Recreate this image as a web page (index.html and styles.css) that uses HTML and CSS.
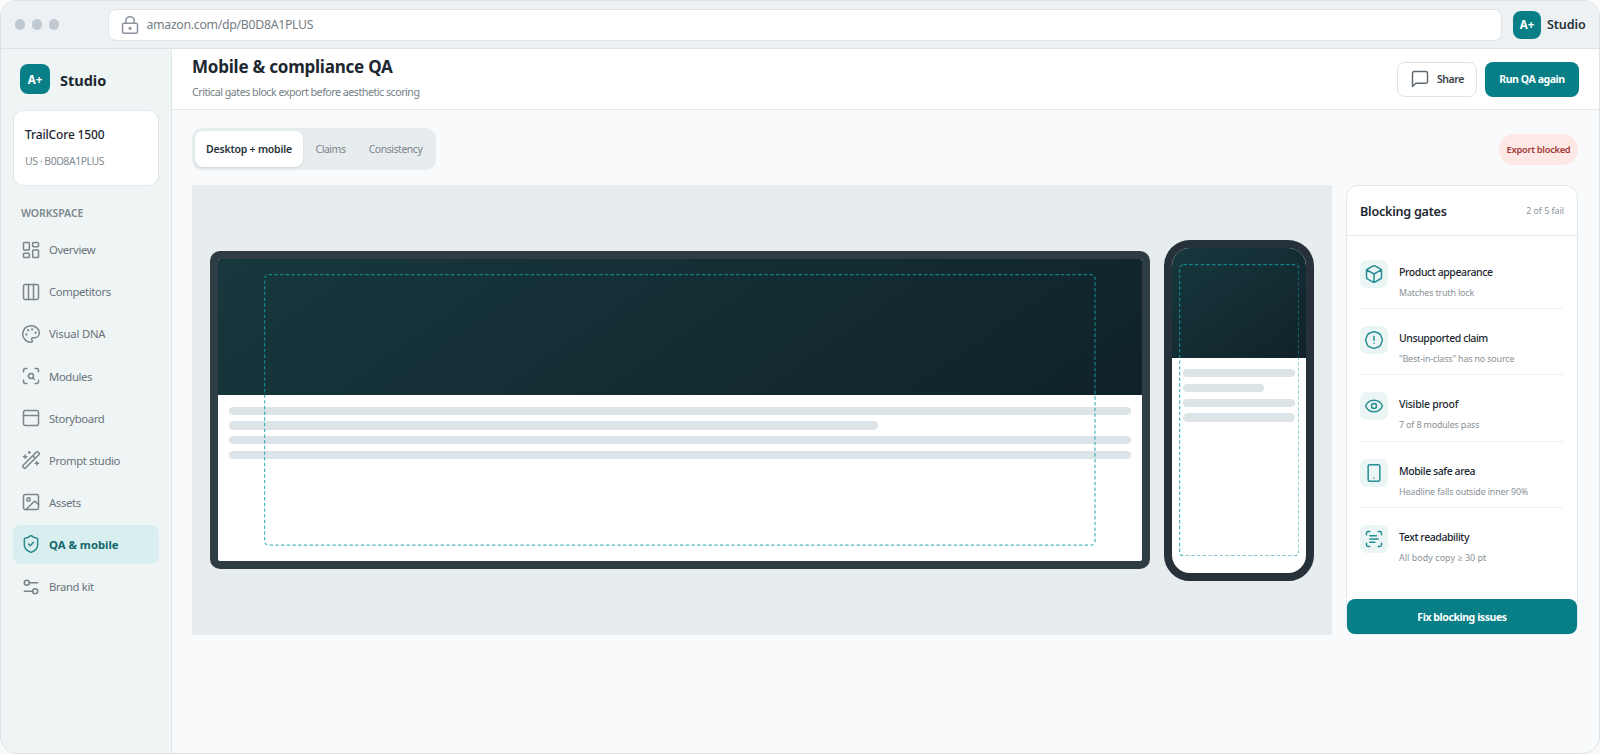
FILE: index.html
```html
<!DOCTYPE html>
<html lang="en">
<head>
<meta charset="utf-8">
<title>Mobile &amp; compliance QA</title>
<link rel="stylesheet" href="styles.css">
</head>
<body>
<div class="window">
  <div class="chrome">
    <div class="dots"><i></i><i></i><i></i></div>
    <div class="url">
      <svg class="ico" viewBox="0 0 24 24"><rect x="3" y="10" width="18" height="12" rx="2"/><path d="M7 10V7a5 5 0 0 1 10 0v3"/><circle cx="12" cy="16" r="1"/></svg>
      <span class="url-text">amazon.com/dp/B0D8A1PLUS</span>
    </div>
    <div class="logo logo-sm">A+</div>
    <span class="chrome-name">Studio</span>
  </div>
  <div class="app">
    <aside class="sidebar">
      <div class="brand"><div class="logo">A+</div><span class="brand-name">Studio</span></div>
      <div class="project"><div class="project-name">TrailCore 1500</div><div class="project-id">US · B0D8A1PLUS</div></div>
      <div class="group">WORKSPACE</div>
      <nav class="nav">
        <a class="item"><svg class="ico" viewBox="0 0 24 24"><rect x="3" y="3" width="7" height="9" rx="1"/><rect x="14" y="3" width="7" height="5" rx="1"/><rect x="14" y="12" width="7" height="9" rx="1"/><rect x="3" y="16" width="7" height="5" rx="1"/></svg><span>Overview</span></a>
        <a class="item"><svg class="ico" viewBox="0 0 24 24"><rect x="3" y="3" width="18" height="18" rx="2"/><path d="M9 3v18M15 3v18"/></svg><span>Competitors</span></a>
        <a class="item"><svg class="ico" viewBox="0 0 24 24"><path d="M12 2a10 10 0 0 0 0 20c.93 0 1.65-.75 1.65-1.69 0-.44-.18-.83-.44-1.12-.29-.29-.44-.65-.44-1.13a1.64 1.64 0 0 1 1.67-1.67h2c3.05 0 5.55-2.5 5.55-5.55C22 6.01 17.46 2 12 2z"/><g class="fill"><circle cx="13.5" cy="6.5" r=".5"/><circle cx="17.5" cy="10.5" r=".5"/><circle cx="8.5" cy="7.5" r=".5"/><circle cx="6.5" cy="12.5" r=".5"/></g></svg><span class="dna">Visual DNA</span></a>
        <a class="item"><svg class="ico" viewBox="0 0 24 24"><path d="M3 7V5a2 2 0 0 1 2-2h2M17 3h2a2 2 0 0 1 2 2v2M21 17v2a2 2 0 0 1-2 2h-2M7 21H5a2 2 0 0 1-2-2v-2"/><circle cx="12" cy="12" r="3"/><path d="m16 16-1.9-1.9"/></svg><span>Modules</span></a>
        <a class="item"><svg class="ico" viewBox="0 0 24 24"><rect x="3" y="3" width="18" height="18" rx="2"/><path d="M3 9h18"/></svg><span>Storyboard</span></a>
        <a class="item"><svg class="ico" viewBox="0 0 24 24"><path d="m21.64 3.64-1.28-1.28a1.21 1.21 0 0 0-1.72 0L2.36 18.64a1.21 1.21 0 0 0 0 1.72l1.28 1.28a1.2 1.2 0 0 0 1.72 0L21.64 5.36a1.2 1.2 0 0 0 0-1.72M14 7l3 3M5 6v4M19 14v4M10 2v2M7 8H3M21 16h-4M11 3H9"/></svg><span>Prompt studio</span></a>
        <a class="item"><svg class="ico" viewBox="0 0 24 24"><rect x="3" y="3" width="18" height="18" rx="2"/><circle cx="9" cy="9" r="2"/><path d="m21 15-3.09-3.09a2 2 0 0 0-2.82 0L6 21"/></svg><span>Assets</span></a>
        <a class="item active"><svg class="ico" viewBox="0 0 24 24"><path d="M20 13c0 5-3.5 7.5-7.66 8.95a1 1 0 0 1-.67-.01C7.5 20.5 4 18 4 13V6a1 1 0 0 1 1-1c2 0 4.500-1.200 6.240-2.720a1.170 1.170 0 0 1 1.520 0C14.510 3.810 17 5 19 5a1 1 0 0 1 1 1z"/><path d="m9 12 2 2 4-4"/></svg><span>QA &amp; mobile</span></a>
        <a class="item"><svg class="ico" viewBox="0 0 24 24"><path d="M20 7h-10M14 17H4"/><circle cx="17" cy="17" r="3"/><circle cx="7" cy="7" r="3"/></svg><span>Brand kit</span></a>
      </nav>
    </aside>
    <main class="main">
      <header class="header">
        <div class="heading"><h1>Mobile &amp; compliance QA</h1><p>Critical gates block export before aesthetic scoring</p></div>
        <button class="btn share"><svg class="ico" viewBox="0 0 24 24"><path d="M21 15a2 2 0 0 1-2 2H7l-4 4V5a2 2 0 0 1 2-2h14a2 2 0 0 1 2 2z"/></svg><span>Share</span></button>
        <button class="btn primary run"><span>Run QA again</span></button>
      </header>
      <section class="content">
        <div class="toolbar">
          <div class="tabs"><span class="tab on">Desktop + mobile</span><span class="tab claims">Claims</span><span class="tab">Consistency</span></div>
          <span class="badge">Export blocked</span>
        </div>
        <div class="columns">
          <div class="stage">
            <div class="device desktop"><div class="hero"></div><div class="lines"><i></i><i class="short"></i><i></i><i></i></div><svg class="safe"><rect x=".6" y=".6" rx="4"/></svg></div>
            <div class="device phone"><div class="hero"></div><div class="lines"><i></i><i class="short"></i><i></i><i></i></div><svg class="safe"><rect x=".6" y=".6" rx="4"/></svg></div>
          </div>
          <div class="panel">
            <div class="panel-head"><h2>Blocking gates</h2><span>2 of 5 fail</span></div>
            <div class="gates">
              <div class="gate"><div class="tile"><svg class="ico" viewBox="0 0 24 24"><path d="M21 8a2 2 0 0 0-1-1.730l-7-4a2 2 0 0 0-2 0l-7 4A2 2 0 0 0 3 8v8a2 2 0 0 0 1 1.730l7 4a2 2 0 0 0 2 0l7-4A2 2 0 0 0 21 16ZM3.300 7l8.700 5 8.700-5M12 22V12"/></svg></div><div class="gate-text"><b>Product appearance</b><small>Matches truth lock</small></div></div>
              <div class="gate"><div class="tile"><svg class="ico" viewBox="0 0 24 24"><path d="M8.300 3.300Q12 .8 15.700 3.300Q20 4 20.700 8.300Q23.200 12 20.700 15.700Q20 20 15.700 20.700Q12 23.200 8.300 20.700Q4 20 3.300 15.700Q.8 12 3.300 8.300Q4 4 8.300 3.300ZM12 7.500v5M12 16h.01"/></svg></div><div class="gate-text"><b>Unsupported claim</b><small>"Best-in-class" has no source</small></div></div>
              <div class="gate"><div class="tile"><svg class="ico" viewBox="0 0 24 24"><path d="M2.060 12.350a1 1 0 0 1 0-.7 10.750 10.750 0 0 1 19.880 0 1 1 0 0 1 0 .7 10.750 10.750 0 0 1-19.880 0"/><circle cx="12" cy="12" r="3"/></svg></div><div class="gate-text"><b class="proof">Visible proof</b><small>7 of 8 modules pass</small></div></div>
              <div class="gate"><div class="tile"><svg class="ico" viewBox="0 0 24 24"><rect x="5" y="2" width="14" height="20" rx="2"/><path d="M12 18h.01"/></svg></div><div class="gate-text"><b>Mobile safe area</b><small>Headline falls outside inner 90%</small></div></div>
              <div class="gate"><div class="tile"><svg class="ico" viewBox="0 0 24 24"><path d="M3 7V5a2 2 0 0 1 2-2h2M17 3h2a2 2 0 0 1 2 2v2M21 17v2a2 2 0 0 1-2 2h-2M7 21H5a2 2 0 0 1-2-2v-2M7 8h8M7 12h10M7 16h6"/></svg></div><div class="gate-text"><b>Text readability</b><small class="copy">All body copy ≥ 30 pt</small></div></div>
            </div>
            <button class="btn primary fix">Fix blocking issues</button>
          </div>
        </div>
      </section>
    </main>
  </div>
</div>
</body>
</html>
```
FILE: styles.css
```css
* { box-sizing: border-box; }
body { margin: 0; background: #fafafa; color: #1d2731; font-family: "Noto Sans", "Open Sans", sans-serif; white-space: nowrap; }
h1, h2, p { margin: 0; }
.window { height: 754px; border: 1px solid #dbe3e8; border-radius: 17px; overflow: hidden; display: flex; flex-direction: column; background: #f8fafc; }
.ico { width: 20px; height: 20px; flex: none; fill: none; stroke: currentColor; stroke-width: 1.8; stroke-linecap: round; stroke-linejoin: round; }
.ico .fill { fill: currentColor; }

.chrome { height: 48px; flex: none; display: flex; align-items: center; padding: 0 14px 0 13.500px; background: #edf1f4; border-bottom: 1px solid #dce3e7; }
.dots { display: flex; gap: 6.500px; width: 93.500px; }
.dots i { width: 10.500px; height: 10.500px; border-radius: 50%; background: #c1c9d0; }
.url { flex: 1; height: 32px; display: flex; align-items: center; gap: 7px; padding-left: 10.500px; background: #fff; border: 1px solid #dce4e8; border-radius: 8px; color: #8b949e; }
.url-text { font-size: 12.300px; letter-spacing: -.3px; color: #747d84; }
.logo { width: 30px; height: 30px; border-radius: 8px; background: #087f86; color: #fff; display: grid; place-items: center; font-size: 11.500px; font-weight: 700; }
.logo-sm { width: 28px; height: 28px; margin: 0 6px 0 11px; }
.chrome-name { font-size: 12.600px; font-weight: 600; width: 38px; letter-spacing: -.1px; color: #27323a; }

.app { flex: 1; display: flex; min-height: 0; }
.sidebar { width: 171px; flex: none; background: #eff4f5; border-right: 1px solid #e2e8ea; padding: 15px 12px 0; }
.brand { display: flex; align-items: center; gap: 10px; padding-left: 7px; height: 30px; }
.brand-name { font-size: 14.500px; font-weight: 700; padding-top: 1px; }
.project { margin-top: 16px; height: 76px; background: #fff; border: 1px solid #e0e7ea; border-radius: 10px; padding: 14px 11px; }
.project-name { font-size: 12px; line-height: 20px; font-weight: 500; letter-spacing: -.15px; }
.project-id { font-size: 10.500px; line-height: 18px; margin-top: 7px; color: #808a91; letter-spacing: -.48px; }
.group { margin: 18px 0 0 8px; font-size: 10.500px; line-height: 18px; font-weight: 600; color: #7d888e; letter-spacing: -.05px; }
.nav { margin-top: 8px; display: flex; flex-direction: column; gap: 2.600px; }
.item { height: 39.500px; display: flex; align-items: center; gap: 8.500px; padding-left: 7.500px; border-radius: 8px; font-size: 11.300px; letter-spacing: -.37px; color: #69737a; }
.item .ico { color: #7b858b; }
.item .dna { letter-spacing: -.2px; }
.item.active { background: #d9eeee; color: #12686d; font-weight: 700; letter-spacing: 0; }
.item.active .ico { color: #308b8f; }

.main { flex: 1; min-width: 0; display: flex; flex-direction: column; }
.header { height: 61px; flex: none; display: flex; align-items: center; gap: 8px; padding: 0 20px; background: #fff; border-bottom: 1px solid #e2e8ea; }
.heading { flex: 1; }
.heading h1 { font-size: 17px; line-height: 24px; font-weight: 700; letter-spacing: -.23px; }
.heading p { font-size: 10.700px; line-height: 18px; margin: 4px 0 3px; color: #747f86; letter-spacing: -.5px; }
.btn { height: 35px; border-radius: 8px; font: 600 10.500px "Noto Sans", "Open Sans", sans-serif; letter-spacing: -.42px; display: flex; align-items: center; justify-content: center; padding: 0; border: 0; }
.share { width: 80px; gap: 7px; background: #fff; border: 1px solid #dce4e8; color: #38434b; }
.share .ico { color: #606a72; }
.primary { background: #087f86; color: #fff; font-weight: 700; }
.run { width: 94px; }
.content { padding: 18px 21px 0 20px; }
.toolbar { display: flex; justify-content: space-between; align-items: center; height: 42px; }
.tabs { display: flex; height: 42px; width: 244px; padding: 3px; border-radius: 10px; background: #e7ecee; }
.tab { font-size: 10.500px; letter-spacing: -.47px; color: #7b858c; display: grid; place-items: center; flex: 1; }
.tab.on { flex: none; width: 108px; background: #fff; border-radius: 8px; color: #27323a; font-weight: 600; letter-spacing: -.2px; box-shadow: 0 1px 2px rgba(30,50,60,.12); }
.claims { flex: none; width: 55px; }
.badge { width: 79px; height: 31px; border-radius: 16px; background: #fde8e6; color: #a23a36; font-size: 9.300px; font-weight: 600; letter-spacing: -.28px; display: grid; place-items: center; }
.columns { display: flex; gap: 14px; margin-top: 15px; }
.stage { flex: 1; height: 450px; display: flex; gap: 14px; align-items: center; padding: 0 18px; background: #e7ecee; }
.device { position: relative; overflow: hidden; background: #fff; border: 8px solid #303c43; }
.desktop { flex: 1; height: 318px; border-radius: 10px; }
.phone { width: 150px; height: 341px; border-radius: 26px; border-color: #27313a; }
.hero { height: 136px; background: linear-gradient(145deg, #17383e, #102229); }
.phone .hero { height: 110px; }
.lines { padding: 11.500px 11px 0; display: flex; flex-direction: column; gap: 6.500px; }
.lines i { height: 8.300px; border-radius: 5px; background: #dde4e7; }
.lines .short { width: 72%; }
.safe { position: absolute; left: 5%; top: 5%; width: 90%; height: 90%; fill: none; stroke: #14a0a6; stroke-opacity: .75; stroke-width: 1.250; stroke-dasharray: 3.400 2.300; }
.safe rect { width: calc(100% - 1.200px); height: calc(100% - 1.200px); }

.panel { width: 232px; height: 450px; background: #fff; border: 1px solid #e2e8eb; border-radius: 12px; display: flex; flex-direction: column; }
.panel-head { height: 50px; flex: none; display: flex; justify-content: space-between; align-items: center; padding: 1px 13px 0; border-bottom: 1px solid #e4eaec; }
.panel-head h2 { font-size: 12.600px; font-weight: 600; letter-spacing: -.24px; }
.panel-head span { font-size: 8.800px; color: #8b949a; }
.gates { padding: 6.500px 14px 0 13px; flex: 1; }
.gate { height: 66.400px; display: flex; gap: 11px; border-bottom: 1px solid #edf1f2; padding-top: 17px; }
.gate:last-child { border-bottom: 0; }
.tile { width: 28px; height: 28px; flex: none; border-radius: 7px; background: #ebf5f6; color: #268e92; display: grid; place-items: center; }
.gate-text { padding-top: 3px; display: flex; flex-direction: column; align-items: flex-start; }
.gate-text b { font-size: 10.500px; line-height: 18px; font-weight: 500; letter-spacing: -.42px; }
.gate-text .proof { letter-spacing: -.27px; }
.gate-text small { font-size: 8.900px; line-height: 16px; margin-top: 4px; color: #879197; letter-spacing: -.14px; }
.gate-text .copy { letter-spacing: .07px; }
.fix { width: 230px; flex: none; }
```
